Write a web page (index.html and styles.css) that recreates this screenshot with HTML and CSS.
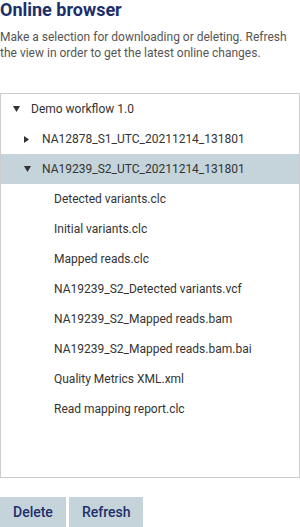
FILE: index.html
```html
<!DOCTYPE html>
<html lang="en">
<head>
  <meta charset="UTF-8" />
  <meta name="viewport" content="width=device-width, initial-scale=1.0"/>
  <title>Online browser</title>
  <link rel="stylesheet" href="styles.css">
</head>
<body>

  <h2 class="title">Online browser</h2>
  <p class="intro">Make a selection for downloading or deleting. Refresh the view in order to get the latest online changes.</p>

  <!-- File tree -->
  <div class="tree">
    <div class="row level-0">
      <span class="toggle"><svg width="7" height="6" viewBox="0 0 7 6"><path d="M0 0H7L3.5 6Z" fill="#333"/></svg></span>
      <span class="label">Demo workflow 1.0</span>
    </div>
    <div class="row level-1">
      <span class="toggle"><svg width="5" height="7" viewBox="0 0 5 7"><path d="M0 0L5 3.5L0 7Z" fill="#333"/></svg></span>
      <span class="label">NA12878_S1_UTC_20211214_131801</span>
    </div>
    <div class="row level-1 selected">
      <span class="toggle"><svg width="7" height="6" viewBox="0 0 7 6"><path d="M0 0H7L3.5 6Z" fill="#333"/></svg></span>
      <span class="label">NA19239_S2_UTC_20211214_131801</span>
    </div>
    <div class="row level-2"><span class="toggle"></span><span class="label">Detected variants.clc</span></div>
    <div class="row level-2"><span class="toggle"></span><span class="label">Initial variants.clc</span></div>
    <div class="row level-2"><span class="toggle"></span><span class="label">Mapped reads.clc</span></div>
    <div class="row level-2"><span class="toggle"></span><span class="label">NA19239_S2_Detected variants.vcf</span></div>
    <div class="row level-2"><span class="toggle"></span><span class="label">NA19239_S2_Mapped reads.bam</span></div>
    <div class="row level-2"><span class="toggle"></span><span class="label">NA19239_S2_Mapped reads.bam.bai</span></div>
    <div class="row level-2"><span class="toggle"></span><span class="label">Quality Metrics XML.xml</span></div>
    <div class="row level-2"><span class="toggle"></span><span class="label">Read mapping report.clc</span></div>
  </div>

  <div class="actions">
    <button class="btn">Delete</button>
    <button class="btn">Refresh</button>
  </div>

</body>
</html>
```

FILE: styles.css
```css
body {
  font-family: Roboto, "Noto Sans", sans-serif;
  background: white;
  margin: 0;
  width: 300px;
}

.title {
  margin: 0;
  font-size: 18px;
  line-height: 20px;
  font-weight: 700;
  color: #1d2f6b;
}

.intro {
  margin: 9px 0 0;
  font-size: 12px;
  line-height: 16px;
  color: #555;
}

.tree {
  margin-top: 32px;
  height: 383px;
  border: 1px solid #ccc;
  overflow: hidden;
}

.row {
  display: flex;
  align-items: center;
  height: 30px;
  font-size: 12px;
  color: #333;
}

.row.selected {
  background: #c5d3da;
}

.level-0 { padding-left: 12px; }
.level-1 { padding-left: 23px; }
.level-2 { padding-left: 35px; }

.toggle {
  display: flex;
  align-items: center;
  width: 18px;
  flex-shrink: 0;
}

.actions {
  display: flex;
  gap: 3px;
  margin-top: 19px;
}

.btn {
  height: 30px;
  padding: 0 13px;
  border: none;
  border-radius: 0;
  background: #c5d3da;
  color: #1d2f6b;
  font-family: Roboto, "Noto Sans", sans-serif;
  font-size: 14px;
  font-weight: 500;
  cursor: pointer;
}
```
